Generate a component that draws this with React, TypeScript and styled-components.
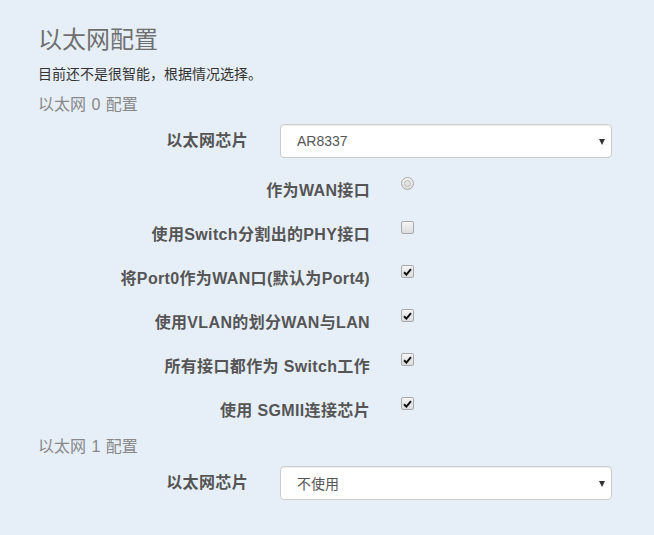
import React from 'react';
import styled, { createGlobalStyle } from 'styled-components';

const GlobalStyle = createGlobalStyle`
  html, body {
    margin: 0;
    padding: 0;
    background: #e6eff8;
  }
  body {
    font-family: "Liberation Sans", "Noto Sans CJK SC", sans-serif;
    color: #333;
  }
`;

const Page = styled.div`
  padding: 25px 42px 30px 38px;
  width: 654px;
  box-sizing: border-box;
`;

const Title = styled.h2`
  margin: 0;
  font-size: 24px;
  line-height: 30px;
  font-weight: 400;
  color: #6f6f6f;
`;

const Desc = styled.p`
  margin: 9px 0 0;
  font-size: 14px;
  line-height: 20px;
  color: #333;
`;

const SubHead = styled.h4<{ $top: number }>`
  margin: ${p => p.$top}px 0 0;
  font-size: 16px;
  line-height: 22px;
  font-weight: 400;
  color: #888;
  word-spacing: 1px;
`;

const SelectRow = styled.div`
  display: flex;
  align-items: center;
  margin-top: 8px;
  height: 34px;
`;

const CheckList = styled.div`
  margin-top: 11px;
`;

const CheckRow = styled.div`
  display: flex;
  align-items: flex-start;
  height: 44px;
`;

const Label = styled.label<{ $width: number }>`
  width: ${p => p.$width}px;
  flex-shrink: 0;
  text-align: right;
  font-size: 16px;
  font-weight: 700;
  color: #555;
  line-height: 44px;
  letter-spacing: 0.35px;
  white-space: nowrap;
`;

const SelectBox = styled.div`
  position: relative;
  margin-left: 32px;
  flex: 1;
  height: 34px;
  box-sizing: border-box;
  background: #fff;
  border: 1px solid #ccc;
  border-radius: 4px;
  box-shadow: inset 0 1px 1px rgba(0, 0, 0, 0.075);
  display: flex;
  align-items: center;
  padding-left: 16px;
  font-size: 14px;
  color: #555;
`;

const Arrow = styled.span`
  position: absolute;
  right: 6px;
  top: 14px;
  width: 0;
  height: 0;
  border-left: 3.5px solid transparent;
  border-right: 3.5px solid transparent;
  border-top: 6px solid #333;
`;

const Box = styled.span<{ $round?: boolean }>`
  margin-left: 31px;
  margin-top: 8px;
  width: 13px;
  height: 13px;
  box-sizing: border-box;
  border: 1px solid #a9a9a9;
  border-radius: ${p => (p.$round ? '50%' : '2px')};
  background: linear-gradient(#f4f4f4, #dcdcdc);
  display: flex;
  align-items: center;
  justify-content: center;
`;

const Dot = styled.span`
  width: 5px;
  height: 5px;
  border-radius: 50%;
  border: 1px solid #bbb;
  background: #e2e2e2;
`;

const Check = () => (
  <svg width="9" height="8" viewBox="0 0 9 8">
    <path d="M1 4.2 L3.4 6.6 L8 1.2" fill="none" stroke="#111" strokeWidth="2" />
  </svg>
);

const EthSelect: React.FC<{ value: string }> = ({ value }) => (
  <SelectRow>
    <Label $width={210}>以太网芯片</Label>
    <SelectBox>
      {value}
      <Arrow />
    </SelectBox>
  </SelectRow>
);

const options = [
  { label: '使用Switch分割出的PHY接口', checked: false },
  { label: '将Port0作为WAN口(默认为Port4)', checked: true },
  { label: '使用VLAN的划分WAN与LAN', checked: true },
  { label: '所有接口都作为 Switch工作', checked: true },
  { label: '使用 SGMII连接芯片', checked: true },
];

export default function App() {
  return (
    <>
      <GlobalStyle />
      <Page>
        <Title>以太网配置</Title>
        <Desc>目前还不是很智能，根据情况选择。</Desc>
        <SubHead $top={10}>以太网 0 配置</SubHead>
        <EthSelect value="AR8337" />
        <CheckList>
          <CheckRow>
            <Label $width={332}>作为WAN接口</Label>
            <Box $round>
              <Dot />
            </Box>
          </CheckRow>
          {options.map(o => (
            <CheckRow key={o.label}>
              <Label $width={332}>{o.label}</Label>
              <Box>{o.checked && <Check />}</Box>
            </CheckRow>
          ))}
        </CheckList>
        <SubHead $top={3}>以太网 1 配置</SubHead>
        <EthSelect value="不使用" />
      </Page>
    </>
  );
}
